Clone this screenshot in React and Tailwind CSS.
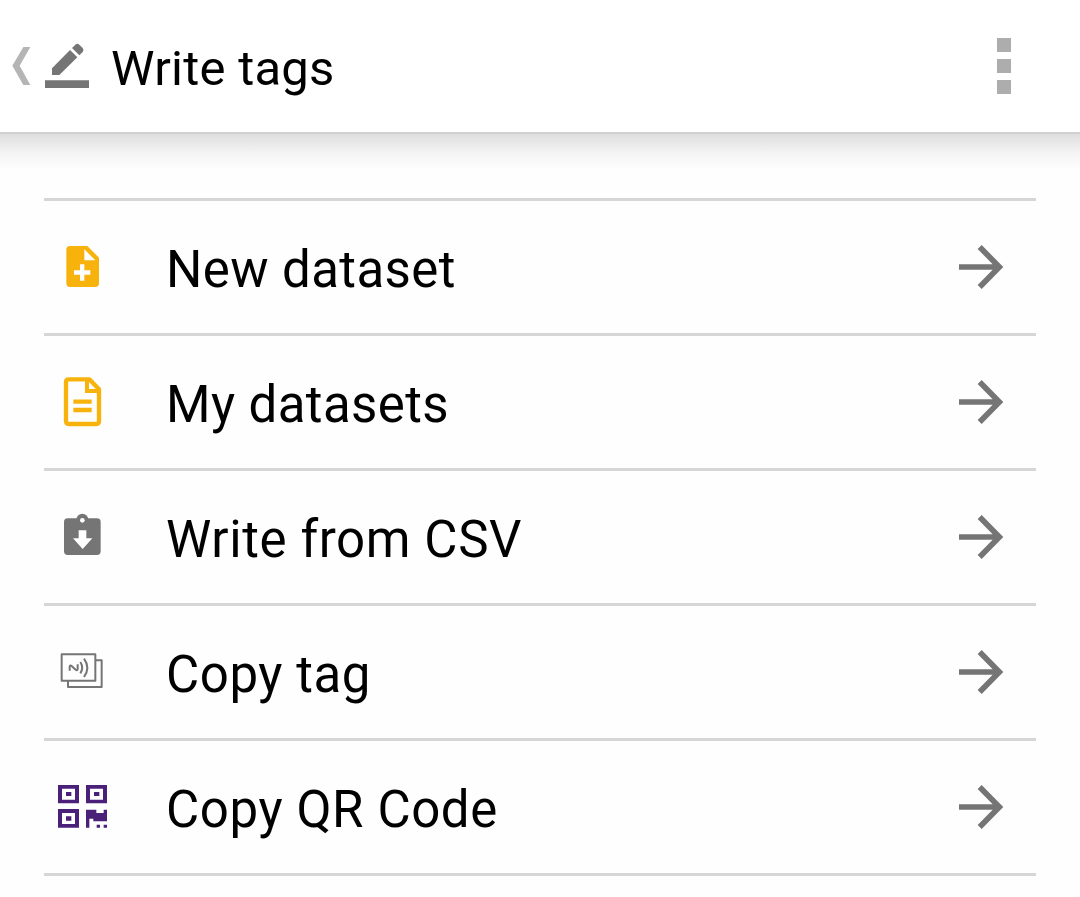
import React from "react";

const AMBER = "#f7b30c";
const GRAY = "#757575";
const PURPLE = "#4b2079";

function RowIcon({ children }) {
  return (
    <svg className="h-[54px] w-[54px] shrink-0" viewBox="48 30 162 162" fill="none">
      {children}
    </svg>
  );
}

function NewFileIcon() {
  return (
    <RowIcon>
      <path fill={AMBER} fillRule="evenodd" d="M90 48H142L177 83V160Q177 171 166 171H90Q79 171 79 160V59Q79 48 90 48ZM133 58V91H166ZM120 103V121H102V134H120V152H133V134H151V121H133V103Z" />
    </RowIcon>
  );
}

function FileIcon() {
  return (
    <RowIcon>
      <path stroke={AMBER} strokeWidth="13" strokeLinejoin="round" d="M86 43H148L177 73V169Q177 177 169 177H86Q78 177 78 169V51Q78 43 86 43Z" />
      <path stroke={AMBER} strokeWidth="12" d="M141 43V78H177" />
      <path stroke={AMBER} strokeWidth="13" d="M100 110H155M100 135H155" />
    </RowIcon>
  );
}

function ClipboardIcon() {
  return (
    <RowIcon>
      <circle cx="127" cy="59" r="18" fill={GRAY} />
      <rect x="72" y="55" width="110" height="110" rx="11" fill={GRAY} />
      <circle cx="127" cy="61" r="7" fill="#fff" />
      <path fill="#fff" d="M116 91H139V115H157L128 147L99 115H116Z" />
    </RowIcon>
  );
}

function CopyTagIcon() {
  return (
    <RowIcon>
      <g stroke={GRAY} strokeWidth="6">
        <path strokeLinejoin="round" d="M65 58H166V137H65ZM166 76H185V156H84V137" />
        <path d="M89 107V95Q90 89 95 93L107 104Q112 108 113 102V88" />
        <path d="M121 81Q132 98 121 115M132 71Q152 98 132 126" />
      </g>
    </RowIcon>
  );
}

function QrIcon() {
  return (
    <RowIcon>
      <path
        fill={PURPLE}
        fillRule="evenodd"
        d="M54 45H117V100H54ZM66 56V89H105V56ZM78 66H94V78H78ZM138 45H201V100H138ZM150 56V89H189V56ZM162 66H178V78H162ZM54 117H117V173H54ZM66 129V162H105V129ZM78 139H94V152H78ZM138 119H169V129H191V119H201V154H160V146H148V173H138ZM170 164H180V173H170ZM191 164H201V173H191Z"
      />
    </RowIcon>
  );
}

function ArrowIcon() {
  return (
    <svg className="h-[48px] w-[48px] shrink-0" viewBox="54 39 144 144" fill="none">
      <path stroke={GRAY} strokeWidth="17" d="M57 111H176M119 51L178 111L119 171" />
    </svg>
  );
}

const rows = [
  { label: "New dataset", Icon: NewFileIcon, tracking: "tracking-[0.4px]" },
  { label: "My datasets", Icon: FileIcon, tracking: "tracking-[0.4px]" },
  { label: "Write from CSV", Icon: ClipboardIcon, tracking: "tracking-[0.6px]" },
  { label: "Copy tag", Icon: CopyTagIcon, tracking: "tracking-[0.55px]" },
  { label: "Copy QR Code", Icon: QrIcon, tracking: "tracking-[0.6px]" },
];

export default function App() {
  return (
    <div className="h-[897px] w-[1080px] overflow-hidden bg-[#fefefe] font-['Roboto',sans-serif] text-black">
      <header className="flex h-[132px] items-center bg-white pr-[69px]">
        <svg className="h-[70px] w-[111px] shrink-0" viewBox="0 3 333 210">
          <path fill="#b5b5b5" d="M37 107L70 51H91L59 107L91 165H70Z" />
          <path fill={GRAY} d="M156 115L210 60L232 82L178 135H156ZM216 54L226 44Q232 39 238 44L248 54Q253 60 248 66L238 76ZM135 151H267V174H135Z" />
        </svg>
        <h1 className="mt-[6px] flex-1 whitespace-nowrap text-[49px] leading-[60px] tracking-[0.25px]">Write tags</h1>
        <div className="flex w-[14px] flex-col gap-[7px]">
          <span className="h-[14px] bg-[#adadad]" />
          <span className="h-[14px] bg-[#adadad]" />
          <span className="h-[14px] bg-[#adadad]" />
        </div>
      </header>
      <div className="h-[2px] bg-[#d1d1d1]" />
      <div className="h-[36px] bg-linear-to-b from-[#dedede] via-[#f3f3f3] to-[#fefefe]" />
      <main className="mx-[44px] mt-[28px] border-t-3 border-[#d6d6d6]">
        {rows.map(({ label, Icon, tracking }) => (
          <button key={label} className="flex h-[135px] w-full items-center border-b-3 border-[#d6d6d6] pr-[30px] pl-[12px] text-left">
            <Icon />
            <span className={`mt-[6px] ml-[56px] flex-1 whitespace-nowrap text-[51px] leading-[60px] ${tracking}`}>{label}</span>
            <ArrowIcon />
          </button>
        ))}
      </main>
    </div>
  );
}
